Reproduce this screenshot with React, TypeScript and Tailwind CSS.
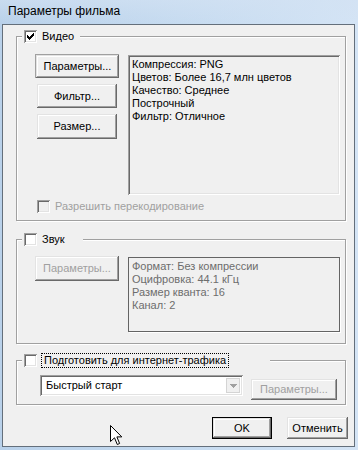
import React from "react";

const raised =
  "shadow-[inset_-1px_-1px_0_#696969,inset_1px_1px_0_#e3e3e3,inset_-2px_-2px_0_#a0a0a0,inset_2px_2px_0_#ffffff]";
const sunken =
  "shadow-[inset_1px_1px_0_#a0a0a0,inset_-1px_-1px_0_#ffffff,inset_2px_2px_0_#696969,inset_-2px_-2px_0_#e3e3e3]";
const etched =
  "border border-[#a0a0a0] shadow-[inset_1px_1px_0_#ffffff,1px_1px_0_#ffffff]";

function Check({ checked, disabled }: { checked?: boolean; disabled?: boolean }) {
  return (
    <div
      className={`relative w-[13px] h-[13px] shrink-0 ${disabled ? "bg-[#f0f0f0]" : "bg-white"} ${sunken}`}
    >
      {checked && (
        <svg
          width="7"
          height="7"
          viewBox="0 0 7 7"
          className="absolute left-[3px] top-[3px]"
          shapeRendering="crispEdges"
        >
          <rect x="0" y="2" width="1" height="3" fill="#000" />
          <rect x="1" y="3" width="1" height="3" fill="#000" />
          <rect x="2" y="4" width="1" height="3" fill="#000" />
          <rect x="3" y="3" width="1" height="3" fill="#000" />
          <rect x="4" y="2" width="1" height="3" fill="#000" />
          <rect x="5" y="1" width="1" height="3" fill="#000" />
          <rect x="6" y="0" width="1" height="3" fill="#000" />
        </svg>
      )}
    </div>
  );
}

function Btn({
  children,
  className = "",
  def,
  disabled,
}: {
  children: React.ReactNode;
  className?: string;
  def?: boolean;
  disabled?: boolean;
}) {
  if (def) {
    return (
      <div className={`border border-[#000] bg-[#f0f0f0] ${className}`}>
        <div
          className={`w-full h-full flex items-center justify-center ${raised} ${disabled ? "text-[#a0a0a0]" : "text-black"}`}
        >
          {children}
        </div>
      </div>
    );
  }
  return (
    <div
      className={`flex items-center justify-center bg-[#f0f0f0] ${raised} ${disabled ? "text-[#a0a0a0]" : "text-black"} ${className}`}
    >
      {children}
    </div>
  );
}

export default function App() {
  return (
    <div className="relative w-[358px] h-[450px] overflow-hidden bg-gradient-to-r from-[#b9d1ea] via-[#c6dbf0] to-[#d4e4f5] font-['Liberation_Sans',Arial,sans-serif] text-[11px] leading-[13px] text-black">
      {/* Title bar */}
      <div className="h-[24px] flex items-center pl-[8px] pb-[3px] bg-gradient-to-b from-[#d3e2f3]/60 to-transparent">
        <span className="font-['Liberation_Sans',Arial,sans-serif] text-[12px] leading-[16px] text-black">
          Параметры фильма
        </span>
      </div>

      {/* Client area */}
      <div className="ml-[2px] w-[353px] h-[423px] border border-[#646f7b] bg-[#f0f0f0] flex flex-col pl-[13px] pr-[6px] pt-[11px]">
        {/* Video group */}
        <div className={`relative w-[330px] h-[185px] ${etched}`}>
          <div className="absolute left-[5px] top-[-7px] w-[58px] h-[13px] bg-[#f0f0f0] flex items-center pl-[2px]">
            <Check checked />
            <span className="ml-[5px]">Видео</span>
          </div>
          <div className="pl-[18px] pt-[17px] flex flex-col">
            <div className="flex">
              <div className="w-[84px] flex flex-col">
                <Btn className="w-[84px] h-[24px] border-t border-l border-[#a0a0a0]">
                  Параметры...
                </Btn>
                <Btn className="ml-[2px] mt-[6px] w-[80px] h-[24px]">Фильтр...</Btn>
                <Btn className="ml-[2px] mt-[6px] w-[80px] h-[25px]">Размер...</Btn>
              </div>
              <div
                className={`ml-[9px] mt-[1px] w-[212px] h-[140px] bg-[#f0f0f0] pl-[4px] pt-[3px] ${sunken}`}
              >
                <div>Компрессия: PNG</div>
                <div>Цветов: Более 16,7 млн цветов</div>
                <div>Качество: Среднее</div>
                <div>Построчный</div>
                <div>Фильтр: Отличное</div>
              </div>
            </div>
            <div className="mt-[5px] ml-[2px] flex items-center h-[13px]">
              <Check disabled />
              <span className="ml-[5px] text-[#a0a0a0]">Разрешить перекодирование</span>
            </div>
          </div>
        </div>

        {/* Sound group */}
        <div className={`relative mt-[18px] w-[330px] h-[105px] ${etched}`}>
          <div className="absolute left-[5px] top-[-7px] w-[61px] h-[13px] bg-[#f0f0f0] flex items-center pl-[2px]">
            <Check />
            <span className="ml-[5px]">Звук</span>
          </div>
          <div className="pl-[18px] pt-[16px] flex">
            <Btn disabled className="w-[84px] h-[25px]">
              Параметры...
            </Btn>
            <div className="ml-[9px] mt-[1px] w-[212px] h-[75px] border border-[#646464] shadow-[1px_1px_0_#ffffff] pl-[3px] pt-[2px] text-[#6d6d6d]">
              <div>Формат: Без компрессии</div>
              <div>Оцифровка: 44.1 кГц</div>
              <div>Размер кванта: 16</div>
              <div>Канал: 2</div>
            </div>
          </div>
        </div>

        {/* Internet group */}
        <div className={`relative mt-[16px] w-[330px] h-[45px] ${etched}`}>
          <div className="absolute left-[5px] top-[-7px] w-[248px] h-[13px] bg-[#f0f0f0] flex items-center pl-[2px]">
            <Check />
            <span className="ml-[4px] h-[15px] px-[2px] border border-dotted border-black flex items-center whitespace-nowrap">
              Подготовить для интернет-трафика
            </span>
          </div>
          <div className="pl-[23px] pt-[14px] flex items-start">
            <div
              className={`w-[203px] h-[21px] bg-white flex items-center pl-[6px] pr-[3px] ${sunken}`}
            >
              <span className="flex-1">Быстрый старт</span>
              <div className="w-[14px] h-[15px] bg-[#f0f0f0] border border-[#d4d4d4] flex items-center justify-center">
                <svg width="7" height="4" viewBox="0 0 7 4" shapeRendering="crispEdges">
                  <path d="M0 0h7v1H0zM1 1h5v1H1zM2 2h3v1H2zM3 3h1v1H3z" fill="#a0a0a0" />
                </svg>
              </div>
            </div>
            <Btn disabled className="ml-[8px] mt-[4px] w-[86px] h-[21px]">
              Параметры...
            </Btn>
          </div>
        </div>

        {/* Bottom buttons */}
        <div className="mt-[12px] flex justify-end gap-[15px]">
          <Btn def className="w-[60px] h-[22px]">
            OK
          </Btn>
          <Btn className="w-[61px] h-[22px]">Отменить</Btn>
        </div>
      </div>

      {/* Mouse cursor */}
      <svg
        width="13"
        height="21"
        viewBox="0 0 13 21"
        className="absolute left-[110px] top-[425px]"
      >
        <path
          d="M0.5 0.5 L0.5 16.5 L4.5 12.8 L7.3 19.5 L9.6 18.5 L6.9 11.9 L11.8 11.9 Z"
          fill="#ffffff"
          stroke="#000000"
          strokeWidth="1"
          strokeLinejoin="miter"
        />
      </svg>
    </div>
  );
}
